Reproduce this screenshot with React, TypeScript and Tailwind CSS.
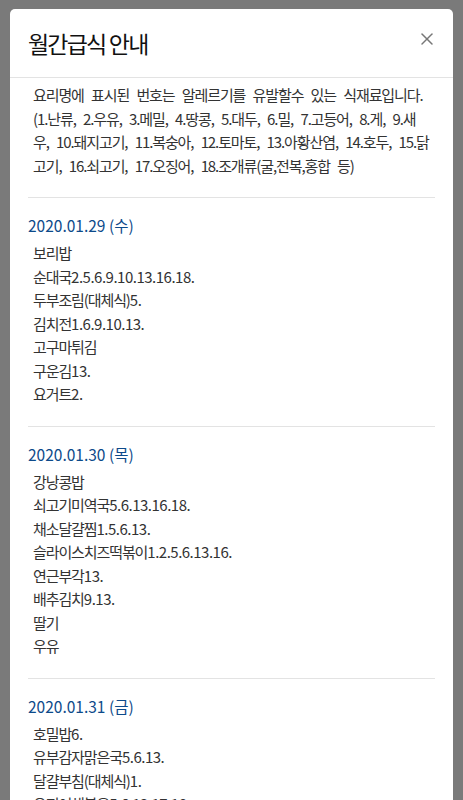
import { X } from "lucide-react";

const notice = [
  "요리명에 표시된 번호는 알레르기를 유발할수 있는 식재료입니다.",
  "(1.난류, 2.우유, 3.메밀, 4.땅콩, 5.대두, 6.밀, 7.고등어, 8.게, 9.새",
  "우, 10.돼지고기, 11.복숭아, 12.토마토, 13.아황산염, 14.호두, 15.닭",
  "고기, 16.쇠고기, 17.오징어, 18.조개류(굴,전복,홍합 등)",
];

const days = [
  {
    date: "2020.01.29 (수)",
    items: ["보리밥", "순대국2.5.6.9.10.13.16.18.", "두부조림(대체식)5.", "김치전1.6.9.10.13.", "고구마튀김", "구운김13.", "요거트2."],
  },
  {
    date: "2020.01.30 (목)",
    items: [
      "강낭콩밥",
      "쇠고기미역국5.6.13.16.18.",
      "채소달걀찜1.5.6.13.",
      "슬라이스치즈떡볶이1.2.5.6.13.16.",
      "연근부각13.",
      "배추김치9.13.",
      "딸기",
      "우유",
    ],
  },
  {
    date: "2020.01.31 (금)",
    items: ["호밀밥6.", "유부감자맑은국5.6.13.", "달걀부침(대체식)1.", "오징어채볶음5.6.13.17.18.", "배추김치9.13."],
  },
];

// split "순대국2.5.6." into dish name and allergen numbers
function Dish({ text }: { text: string }) {
  const m = text.match(/^(.*?)([\d.]+)$/);
  if (!m) return <li>{text}</li>;
  return (
    <li>
      {m[1]}
      <span className="tracking-[-0.5px]">{m[2]}</span>
    </li>
  );
}

export default function App() {
  return (
    <div
      className="h-[800px] overflow-hidden bg-[#7a7a7a] px-[10px] pt-[9px]"
      style={{ fontFamily: '"Noto Sans CJK KR", "Noto Sans", sans-serif' }}
    >
      <div className="rounded-[5px] bg-white">
        <div className="flex h-[69px] items-center justify-between border-b border-[#e3e3e3] pl-[18px] pr-[16px]">
          <h1 className="text-[23px] tracking-[-1.8px] text-[#111]">월간급식 안내</h1>
          <X className="-mt-[8px] h-[20px] w-[20px] text-[#777]" strokeWidth={1.8} />
        </div>
        <div className="px-[18px]">
          <p className="pb-[20px] pl-[5px] pt-[5px] text-[15px] leading-[23.5px] tracking-[-1.1px] text-[#333] [word-spacing:5px]">
            {notice.map((line) => (
              <span key={line} className="block whitespace-nowrap">
                {line}
              </span>
            ))}
          </p>
          {days.map((d) => (
            <div key={d.date} className="border-t border-[#e3e3e3] pb-[20px] pt-[15px]">
              <div className="text-[15.5px] leading-[24px] text-[#0d4a8a]">{d.date}</div>
              <ul className="mt-[4px] pl-[5px] text-[15px] leading-[23.5px] tracking-[-1.1px] text-[#333]">
                {d.items.map((it) => (
                  <Dish key={it} text={it} />
                ))}
              </ul>
            </div>
          ))}
        </div>
      </div>
    </div>
  );
}
